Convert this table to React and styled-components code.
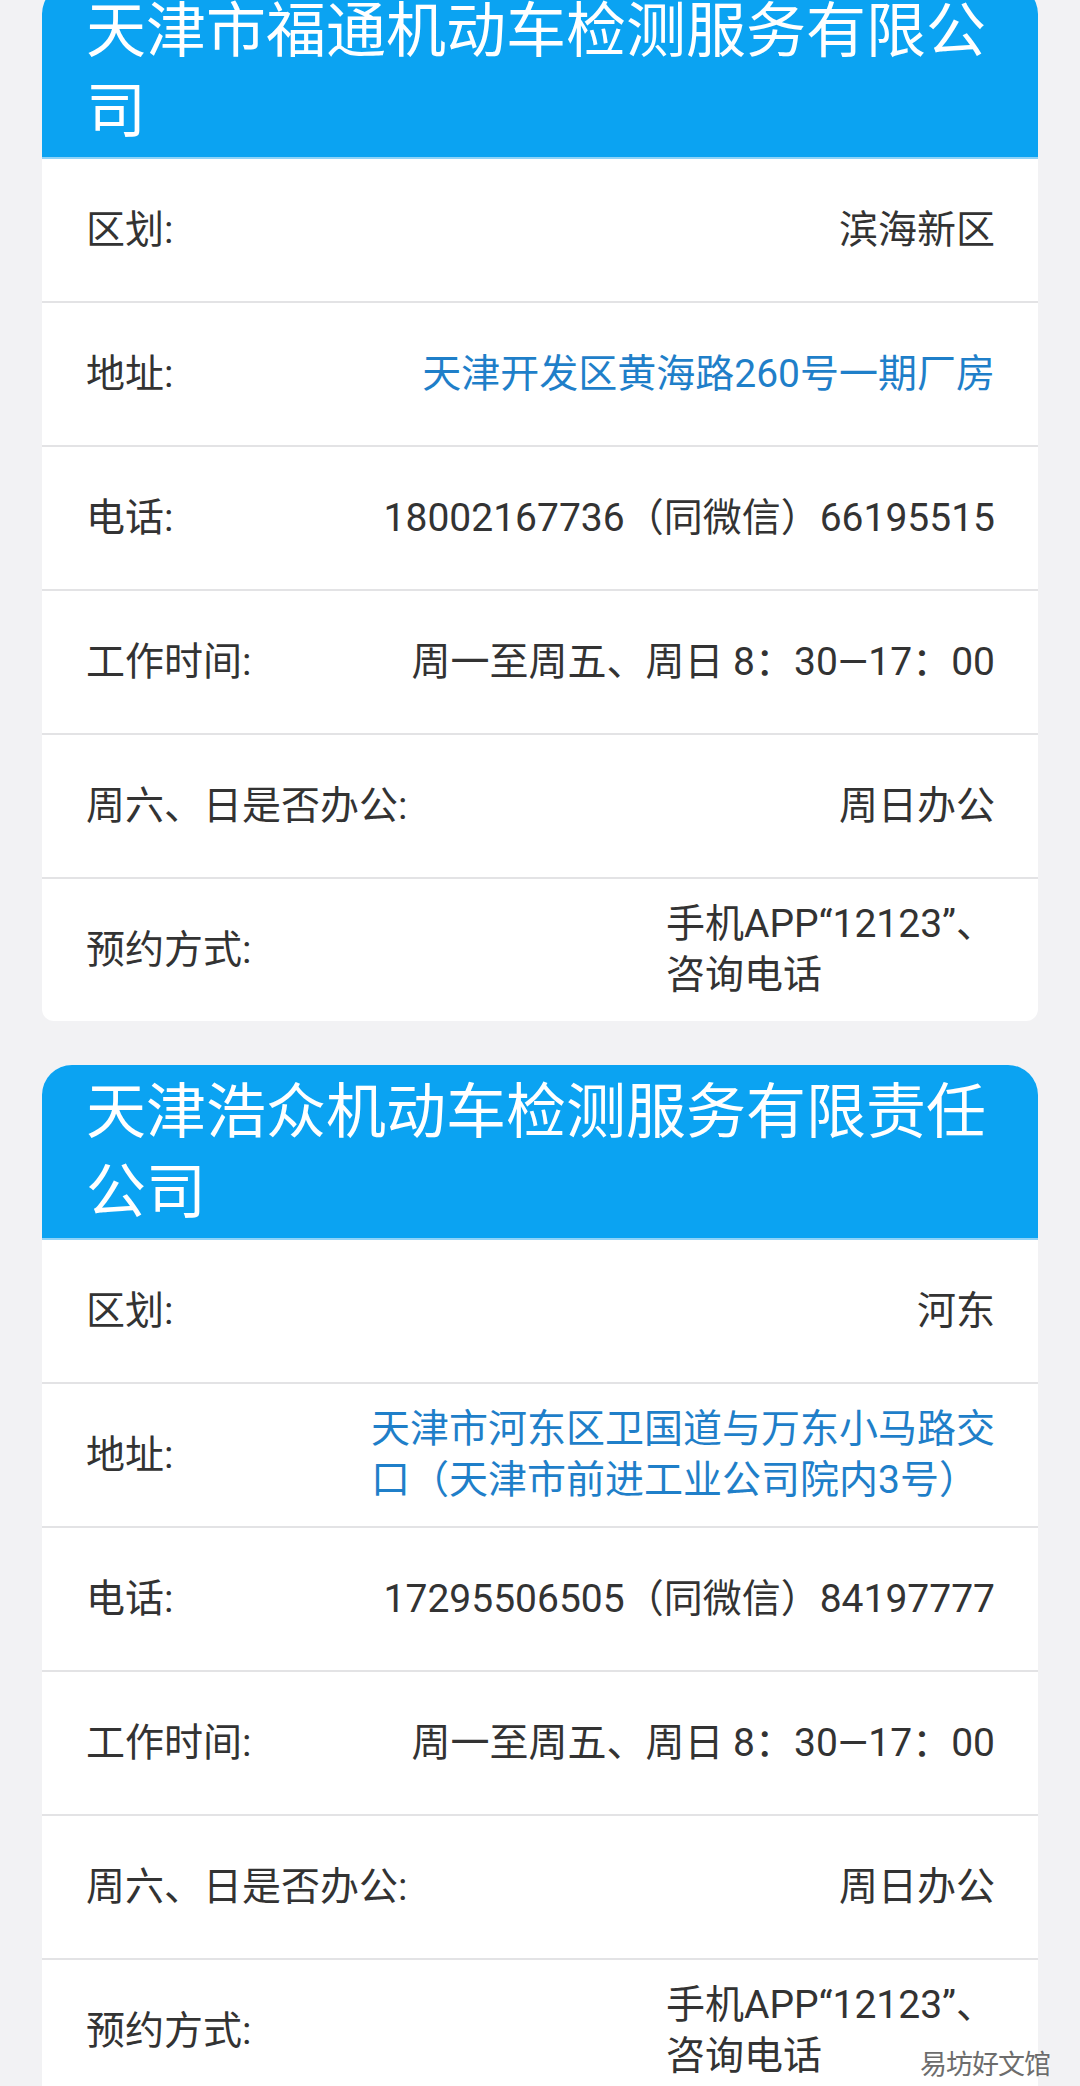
import styled, { createGlobalStyle } from 'styled-components';

const GlobalStyle = createGlobalStyle`
  html, body {
    margin: 0;
    padding: 0;
    background: #f2f2f4;
  }
  body {
    font-family: Roboto, "Noto Sans CJK SC", sans-serif;
    color: #333;
  }
`;

const Page = styled.div`
  position: relative;
  width: 1080px;
  height: 2086px;
  overflow: hidden;
  background: #f2f2f4;
`;

const List = styled.div`
  display: flex;
  flex-direction: column;
  gap: 44px;
  padding: 0 42px;
  margin-top: -16px;
`;

const Card = styled.div`
  background: #fff;
  border-radius: 30px 30px 12px 12px;
  overflow: hidden;
`;

const CardHeader = styled.div`
  background: #0ba3f2;
  color: #fff;
  font-size: 60px;
  line-height: 80px;
  padding: 8px 44px 5px 44px;
  border-bottom: 2px solid #8fd3f8;
`;

const Row = styled.div`
  display: flex;
  align-items: center;
  justify-content: space-between;
  height: 142px;
  padding: 0 43px 0 44px;
  border-top: ${(p) => (p.$first ? 'none' : '2px solid #e3e3e5')};
`;

const Label = styled.span`
  flex-shrink: 0;
  font-size: 39px;
  line-height: 51px;
`;

const Value = styled.div`
  max-width: 660px;
  font-size: 39px;
  line-height: 51px;
  text-align: ${(p) => (p.$multi ? 'left' : 'right')};
  color: ${(p) => (p.$link ? '#1f7fc9' : '#333')};
`;

const Watermark = styled.div`
  position: absolute;
  right: 30px;
  bottom: 4px;
  font-size: 27px;
  color: #6d6d6d;
  letter-spacing: -1px;
  text-shadow: 0 0 2px #fff, 0 0 2px #fff;
`;

const cards = [
  {
    title: '天津市福通机动车检测服务有限公司',
    rows: [
      ['区划:', ['滨海新区']],
      ['地址:', ['天津开发区黄海路260号一期厂房'], true],
      ['电话:', ['18002167736（同微信）66195515']],
      ['工作时间:', ['周一至周五、周日 8：30—17：00']],
      ['周六、日是否办公:', ['周日办公']],
      ['预约方式:', ['手机APP“12123”、', '咨询电话']],
    ],
  },
  {
    title: '天津浩众机动车检测服务有限责任公司',
    rows: [
      ['区划:', ['河东']],
      ['地址:', ['天津市河东区卫国道与万东小马路交', '口（天津市前进工业公司院内3号）'], true],
      ['电话:', ['17295506505（同微信）84197777']],
      ['工作时间:', ['周一至周五、周日 8：30—17：00']],
      ['周六、日是否办公:', ['周日办公']],
      ['预约方式:', ['手机APP“12123”、', '咨询电话']],
    ],
  },
];

export default function App() {
  return (
    <Page>
      <GlobalStyle />
      <List>
        {cards.map((card) => (
          <Card key={card.title}>
            <CardHeader>{card.title}</CardHeader>
            {card.rows.map(([label, lines, link], i) => (
              <Row key={label} $first={i === 0}>
                <Label>{label}</Label>
                <Value $link={link} $multi={lines.length > 1}>
                  {lines.map((l) => (
                    <div key={l}>{l}</div>
                  ))}
                </Value>
              </Row>
            ))}
          </Card>
        ))}
      </List>
      <Watermark>易坊好文馆</Watermark>
    </Page>
  );
}
